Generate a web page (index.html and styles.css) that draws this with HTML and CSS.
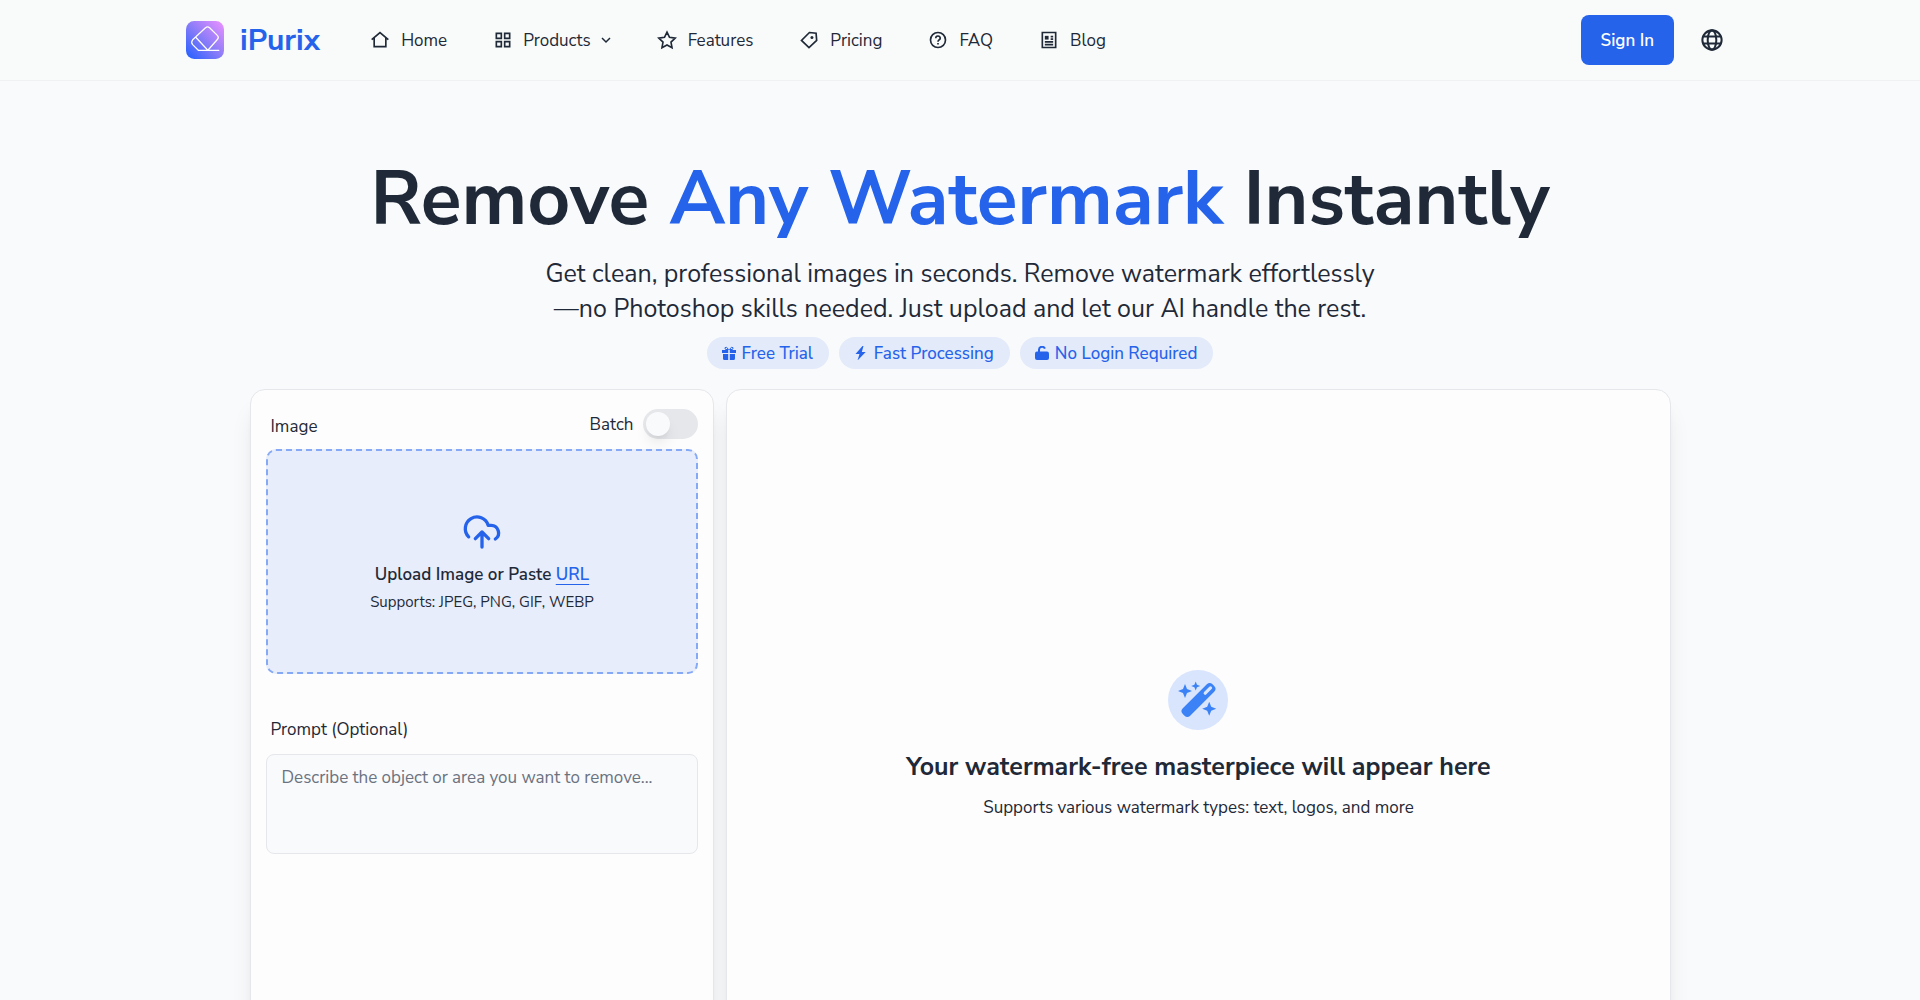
FILE: index.html
```html
<!DOCTYPE html>
<html lang="en">

<head>
    <meta charset="UTF-8" />
    <meta name="viewport" content="width=device-width, initial-scale=1.0" />
    <title>iPurix - Remove Any Watermark Instantly</title>
    <link rel="stylesheet" href="styles.css">
</head>

<body>
    <header class="header">
        <div class="header-inner">
            <a href="#" class="brand">
                <svg class="brand-logo" viewBox="0 0 37 37" fill="none">
                    <defs>
                        <linearGradient id="logoFill" x1="0" y1="1" x2="1" y2="0">
                            <stop offset="0" stop-color="#1f5fff" />
                            <stop offset="0.5" stop-color="#8b7cf8" />
                            <stop offset="1" stop-color="#ee92ff" />
                        </linearGradient>
                    </defs>
                    <rect width="37" height="37" rx="8" fill="url(#logoFill)" />
                    <path d="M19 6.6q2-1.8 4 0l7.5 7.4q2 2 0 4L21.300 28.500H12L6.500 23q-2-2.400 0-4.700ZM9.500 15.800L21.300 28.500H32" stroke="#fff" stroke-width="1.200" stroke-linejoin="round" stroke-linecap="round" />
                </svg>
                <span>iPurix</span>
            </a>

            <nav class="nav">
                <a href="#">
                    <svg class="icon" viewBox="0 0 24 24"><path d="M2 11.500L12 3l10 8.500M5 9.500V20h14V9.500" /></svg>
                    Home
                </a>
                <button type="button">
                    <svg class="icon" viewBox="0 0 24 24"><path d="M4 4h6v6H4zM14 4h6v6h-6zM4 14h6v6H4zM14 14h6v6h-6z" /></svg>
                    Products
                    <svg class="chevron" viewBox="0 0 10 10"><path d="M1 3l4 4 4-4" /></svg>
                </button>
                <a href="#">
                    <svg class="icon" viewBox="0 0 24 24"><path d="M12 2.500l3 6.300 6.800 1-5 4.700 1.200 6.700-6-3.300-6 3.300 1.200-6.700-5-4.700 6.800-1z" /></svg>
                    Features
                </a>
                <a href="#">
                    <svg class="icon" viewBox="0 0 24 24"><path d="M12.500 3l8 .8 .7 8.700L12 21 3 12.500z" /><circle class="solid" cx="15.500" cy="9" r="1.800" /></svg>
                    Pricing
                </a>
                <a href="#">
                    <svg class="icon" viewBox="0 0 24 24"><circle cx="12" cy="12" r="9" /><path d="M9.300 9.800a2.700 2.500 0 1 1 4.200 2c-1 .6-1.500 1-1.500 2.200M12 15.500v2" /></svg>
                    FAQ
                </a>
                <a href="#">
                    <svg class="icon" viewBox="0 0 24 24"><path d="M4 3h16v18H4zM14 8h3M14 11h3M7 14.200h10M7 17.500h10" /><path class="solid" d="M7 7h4.500v4.500H7z" /></svg>
                    Blog
                </a>
            </nav>

            <div class="actions">
                <a href="#" class="signin">Sign In</a>
                <button type="button" class="language" aria-label="Language">
                    <svg viewBox="0 0 24 24"><circle cx="12" cy="12" r="10.500" /><ellipse cx="12" cy="12" rx="4.700" ry="10.500" /><path d="M2 8.300h20M2 15.700h20" /></svg>
                </button>
            </div>
        </div>
    </header>

    <main class="main">
        <section class="hero">
            <h1>Remove <span>Any Watermark</span> Instantly</h1>
            <p>Get clean, professional images in seconds. Remove watermark effortlessly—no Photoshop skills needed. Just upload and let our AI handle the rest.</p>
            <div class="badges">
                <span class="badge">
                    <svg viewBox="0 0 14 14"><path d="M0 4h6.200v3H0zM7.800 4H14v3H7.800zM1 8h5.200v6H2.500Q1 14 1 12.500zM7.800 8H13v4.500Q13 14 11.500 14H7.800z" /><path class="line" d="M6.500 3.500H4Q2.500 3 3 1.700 4.500 0 6.500 3.500zM7.500 3.500H10Q11.500 3 11 1.700 9.500 0 7.500 3.500z" /></svg>
                    Free Trial
                </span>
                <span class="badge">
                    <svg viewBox="0 0 14 14"><path d="M8.500 0L1.500 8h4L3.500 14.500 11.700 6H7.800L9.500 0z" /></svg>
                    Fast Processing
                </span>
                <span class="badge">
                    <svg viewBox="0 0 14 14"><path d="M2 5.500h10q2 0 2 2V12q0 2-2 2H2q-2 0-2-2V7.500q0-2 2-2z" /><path class="line wide" d="M4 6V3.500Q4.200.8 7 .8 9.200.8 9.900 2.600" /></svg>
                    No Login Required
                </span>
            </div>
        </section>

        <section class="workspace">
            <form class="panel upload-panel" action="#" method="post">
                <div class="panel-top">
                    <h2 class="field-label">Image</h2>
                    <div class="batch">
                        <label for="batch">Batch</label>
                        <input type="checkbox" id="batch" name="batch" class="toggle" />
                    </div>
                </div>

                <div class="dropzone">
                    <svg viewBox="0 0 24 24"><path d="M4 14.900A7 7 0 1 1 15.700 8h1.800a4.500 4.500 0 0 1 2.500 8.200M12 12v9M16 16l-4-4-4 4" /></svg>
                    <p class="drop-title">Upload Image or Paste <a href="#">URL</a></p>
                    <p class="drop-hint">Supports: JPEG, PNG, GIF, WEBP</p>
                </div>

                <label for="prompt" class="field-label">Prompt (Optional)</label>
                <textarea id="prompt" name="prompt" placeholder="Describe the object or area you want to remove..."></textarea>
            </form>

            <div class="panel result-panel">
                <svg class="wand" viewBox="0 0 60 60">
                    <circle cx="30" cy="30" r="30" fill="#d8e5fd" />
                    <g fill="#3b82f6">
                        <rect x="9.500" y="24.800" width="42" height="10.400" rx="4" transform="rotate(-45 30.500 30)" />
                        <path d="M17 14l2 5 5 2-5 2-2 5-2-5-5-2 5-2zM27.700 11.500l1.300 3.200 3.200 1.300-3.200 1.300-1.300 3.200-1.300-3.200-3.200-1.300 3.200-1.300zM41.200 31.700l2 5 5 2-5 2-2 5-2-5-5-2 5-2z" />
                    </g>
                    <path d="M37.200 23.200l5.300-5.300" stroke="#d8e5fd" stroke-width="3.200" stroke-linecap="round" />
                </svg>
                <h2>Your watermark-free masterpiece will appear here</h2>
                <p>Supports various watermark types: text, logos, and more</p>
            </div>
        </section>
    </main>
</body>

</html>
```
FILE: styles.css
```css
* {
    box-sizing: border-box;
}

body {
    font-family: "Nunito Sans", Nunito, "Open Sans", sans-serif;
    font-size: 17px;
    line-height: 25px;
    margin: 0;
    color: #1f2937;
    background-color: #f9fafc;
}

h1,
h2,
p {
    margin: 0;
}

a {
    color: inherit;
    text-decoration: none;
}

button,
input,
textarea {
    font: inherit;
    color: inherit;
}

button {
    background: none;
    border: none;
    padding: 0;
    cursor: pointer;
}

/* header */
.header {
    background-color: #f9fbfa;
    border-bottom: 1px solid #f0f1f3;
}

.header-inner {
    display: flex;
    align-items: center;
    max-width: 1548px;
    height: 80px;
    margin: 0 auto;
}

.brand {
    display: flex;
    align-items: center;
    gap: 16px;
    color: #2563eb;
    font-size: 30px;
    font-weight: 700;
}

.brand-logo {
    width: 38px;
    height: 38px;
}

.nav {
    display: flex;
    align-items: center;
    gap: 46px;
    margin-left: 50px;
}

.nav a,
.nav button {
    display: flex;
    align-items: center;
    gap: 11px;
}

.nav button {
    gap: 10px;
}

.icon {
    width: 20px;
    height: 20px;
    fill: none;
    stroke: #1f2937;
    stroke-width: 2;
}

.icon .solid {
    fill: #1f2937;
    stroke: none;
}

.chevron {
    width: 10px;
    height: 10px;
    fill: none;
    stroke: #1f2937;
    stroke-width: 1.500;
}

.actions {
    display: flex;
    align-items: center;
    gap: 13px;
    margin-left: auto;
}

.signin {
    padding: 13px 20px 12px;
    border-radius: 8px;
    background-color: #2563eb;
    color: white;
    font-weight: 600;
}

.language {
    display: flex;
    padding: 14px 11px 14px 14px;
}

.language svg {
    width: 22px;
    height: 22px;
    fill: none;
    stroke: #1f2937;
    stroke-width: 2.200;
}

/* hero */
.main {
    max-width: 1421px;
    margin: 0 auto;
    padding: 81px 0 60px;
}

.hero {
    text-align: center;
}

.hero h1 {
    font-size: 75px;
    font-weight: 700;
    line-height: 75px;
}

.hero h1 span {
    color: #2563eb;
}

.hero p {
    max-width: 840px;
    margin: 20px auto 10px;
    font-size: 25px;
    line-height: 35px;
}

.badges {
    display: flex;
    justify-content: center;
    gap: 10px;
}

.badge {
    display: flex;
    align-items: center;
    gap: 6px;
    height: 32px;
    padding: 0 16px 0 15px;
    border-radius: 16px;
    background-color: #e3eaf9;
    color: #2563eb;
    font-weight: 500;
}

.badge svg {
    width: 14px;
    height: 14px;
    fill: #2563eb;
}

.badge .line {
    fill: none;
    stroke: #2563eb;
}

.badge .wide {
    stroke-width: 2;
}

/* workspace */
.workspace {
    display: grid;
    grid-template-columns: 33fr 67fr;
    gap: 12px;
    margin-top: 20px;
}

.panel {
    min-height: 712px;
    border: 1px solid #e5e7eb;
    border-radius: 15px;
    background-color: #fdfdfd;
    box-shadow: 0 20px 25px -5px rgba(0, 0, 0, 0.1), 0 8px 10px -6px rgba(0, 0, 0, 0.1);
}

.upload-panel {
    display: flex;
    flex-direction: column;
    padding: 19px 15px 15px;
}

.panel-top {
    display: flex;
    align-items: flex-end;
    justify-content: space-between;
    margin-bottom: 10px;
}

.field-label {
    padding-left: 5px;
    font-size: 17px;
    font-weight: 400;
}

.batch {
    display: flex;
    align-items: center;
    gap: 10px;
}

.toggle {
    appearance: none;
    width: 55px;
    height: 30px;
    margin: 0;
    padding: 3px;
    border-radius: 15px;
    background-color: #e5e7eb;
    cursor: pointer;
}

.toggle::before {
    content: "";
    display: block;
    width: 24px;
    height: 24px;
    border-radius: 50%;
    background-color: #f9fafb;
    box-shadow: 0 10px 15px -3px rgba(0, 0, 0, 0.1), 0 4px 6px -4px rgba(0, 0, 0, 0.1);
}

.toggle:checked {
    background-color: #2563eb;
}

.toggle:checked::before {
    margin-left: auto;
}

.dropzone {
    display: flex;
    flex-direction: column;
    align-items: center;
    justify-content: center;
    height: 225px;
    margin-bottom: 43px;
    border: 2px dashed #86a9f5;
    border-radius: 10px;
    background-color: #e7edfb;
}

.dropzone svg {
    width: 40px;
    height: 40px;
    margin-bottom: 10px;
    fill: none;
    stroke: #2563eb;
    stroke-width: 2;
    stroke-linecap: round;
    stroke-linejoin: round;
}

.drop-title {
    margin-bottom: 5px;
    font-weight: 600;
}

.drop-title a {
    color: #2563eb;
    text-decoration: underline;
    text-underline-offset: 4px;
}

.drop-hint {
    font-size: 15px;
    line-height: 20px;
}

textarea {
    height: 100px;
    margin-top: 12px;
    padding: 10px 15px;
    border: 1px solid #e5e7eb;
    border-radius: 8px;
    background-color: #f9fafc;
    resize: none;
}

textarea::placeholder {
    color: #6b7280;
}

.result-panel {
    display: flex;
    flex-direction: column;
    align-items: center;
    justify-content: center;
    text-align: center;
}

.wand {
    width: 60px;
    height: 60px;
    margin-bottom: 20px;
}

.result-panel h2 {
    margin-bottom: 10px;
    font-size: 25px;
    font-weight: 700;
    line-height: 35px;
}
```
